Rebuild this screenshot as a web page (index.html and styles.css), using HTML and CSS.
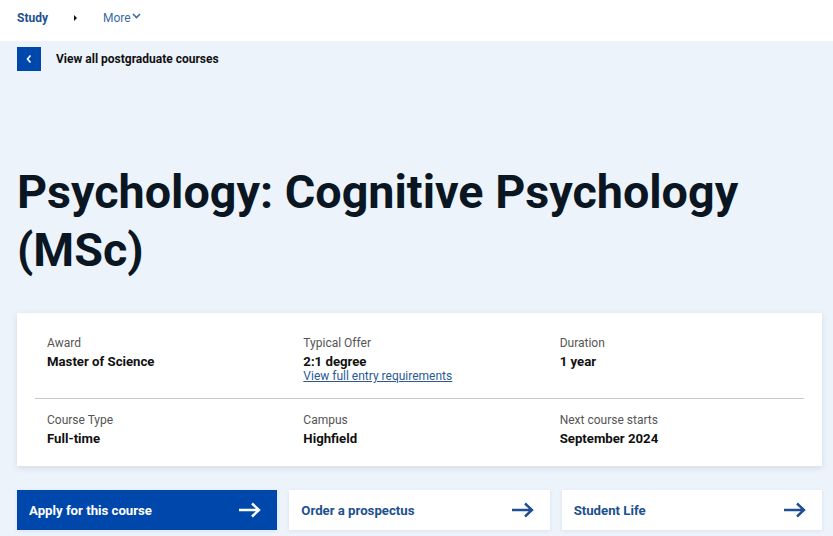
FILE: index.html
```html
<!DOCTYPE html>
<html lang="en">
<head>
<meta charset="utf-8">
<title>Psychology: Cognitive Psychology (MSc)</title>
<link rel="stylesheet" href="styles.css">
</head>
<body>
<nav class="topnav">
  <a class="nav-study" href="#">Study</a>
  <span class="nav-sep"></span>
  <a class="nav-more" href="#">More<svg class="chev" width="9" height="6" viewBox="0 0 9 6"><path d="M1 1l3.5 3.5L8 1" fill="none" stroke="currentColor" stroke-width="1.6"/></svg></a>
</nav>
<main class="hero">
  <div class="back">
    <span class="back-btn"><svg width="8" height="10" viewBox="0 0 8 10"><path d="M5.5 1.5L2.5 5l3 3.5" fill="none" stroke="#fff" stroke-width="1.6"/></svg></span>
    <span class="back-text">View all postgraduate courses</span>
  </div>
  <h1 class="title">Psychology: Cognitive Psychology (MSc)</h1>
  <section class="card">
    <div class="row">
      <div class="cell"><div class="label">Award</div><div class="value">Master of Science</div></div>
      <div class="cell"><div class="label">Typical Offer</div><div class="value">2:1 degree</div><a class="link" href="#">View full entry requirements</a></div>
      <div class="cell"><div class="label">Duration</div><div class="value">1 year</div></div>
    </div>
    <div class="row row-2">
      <div class="cell"><div class="label">Course Type</div><div class="value">Full-time</div></div>
      <div class="cell"><div class="label">Campus</div><div class="value">Highfield</div></div>
      <div class="cell"><div class="label">Next course starts</div><div class="value">September 2024</div></div>
    </div>
  </section>
  <div class="actions">
    <a class="action primary" href="#"><span>Apply for this course</span><svg class="arrow" width="24" height="16" viewBox="0 0 24 16"><path d="M1 8h20M14 1.5L21 8l-7 6.5" fill="none" stroke="currentColor" stroke-width="2.4"/></svg></a>
    <a class="action" href="#"><span>Order a prospectus</span><svg class="arrow" width="24" height="16" viewBox="0 0 24 16"><path d="M1 8h20M14 1.5L21 8l-7 6.5" fill="none" stroke="currentColor" stroke-width="2.4"/></svg></a>
    <a class="action" href="#"><span>Student Life</span><svg class="arrow" width="24" height="16" viewBox="0 0 24 16"><path d="M1 8h20M14 1.5L21 8l-7 6.5" fill="none" stroke="currentColor" stroke-width="2.4"/></svg></a>
  </div>
</main>
</body>
</html>
```
FILE: styles.css
```css
* { box-sizing: border-box; }
html, body { margin: 0; padding: 0; }
body {
  font-family: Roboto, "Liberation Sans", sans-serif;
  background: #edf3fb;
  color: #0b1623;
  width: 833px;
  height: 536px;
  overflow: hidden;
}
a { text-decoration: none; }
.topnav {
  height: 41px;
  background: #fff;
  display: flex;
  align-items: center;
  padding: 0 0 6px 17px;
  font-size: 12px;
}
.nav-study { color: #1d4f91; font-weight: 700; }
.nav-sep {
  width: 0; height: 0;
  border-top: 3px solid transparent;
  border-bottom: 3px solid transparent;
  border-left: 3.5px solid #111;
  margin: 1px 0 0 26px;
}
.nav-more { color: #3c6aa4; margin-left: 26px; display: flex; align-items: center; }
.chev { margin: -3px 0 0 1px; }
.hero { padding: 6px 11px 0 17px; }
.back { display: flex; align-items: center; height: 24px; }
.back-btn {
  width: 24px; height: 24px;
  background: #0047ab;
  display: flex; align-items: center; justify-content: center;
}
.back-text { margin-left: 15px; font-size: 12px; font-weight: 700; color: #111; }
.title {
  margin: 92px 0 0;
  font-size: 46.7px;
  line-height: 58px;
  font-weight: 700;
  color: #0b1623;
  max-width: 780px;
}
.card {
  margin-top: 34px;
  background: #fff;
  box-shadow: 0 2px 6px rgba(30, 50, 80, 0.12);
  padding: 23px 18px 19px;
}
.row {
  display: grid;
  grid-template-columns: repeat(3, 1fr);
  padding-bottom: 16px;
  border-bottom: 1px solid #c9c9c9;
}
.row-2 { border-bottom: none; padding: 14px 0 0; }
.cell { padding-left: 12px; }
.label { font-size: 12px; line-height: 15px; color: #555; }
.value { font-size: 13.2px; line-height: 17px; font-weight: 700; color: #111; margin-top: 2px; }
.link { display: block; font-size: 12px; line-height: 12px; color: #2b5a96; text-decoration: underline; }
.actions {
  margin-top: 24px;
  display: grid;
  grid-template-columns: repeat(3, 1fr);
  gap: 12px;
}
.action {
  height: 40px;
  background: #fff;
  color: #1d4f91;
  display: flex;
  align-items: center;
  justify-content: space-between;
  padding: 0 15px 0 12px;
  font-size: 13.2px;
  font-weight: 700;
  box-shadow: 0 1px 4px rgba(30, 50, 80, 0.08);
}
.action.primary { background: #0047ab; color: #fff; }
.arrow { display: block; }
```
